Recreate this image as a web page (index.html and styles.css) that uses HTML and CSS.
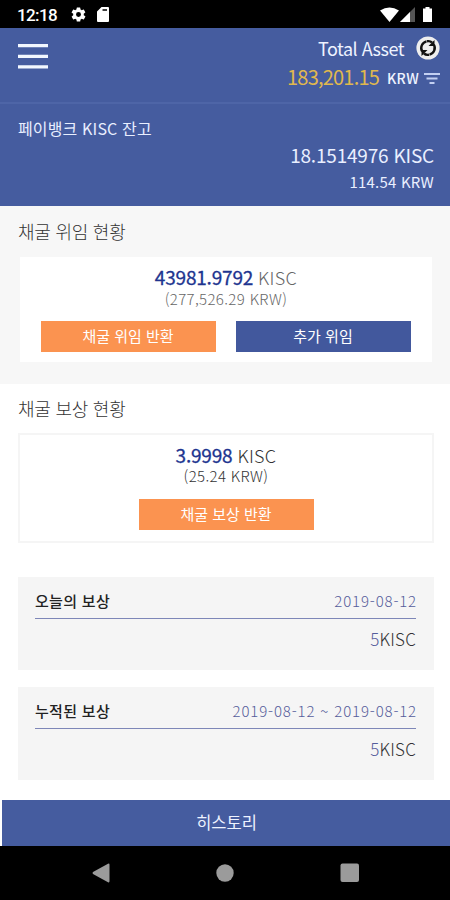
FILE: index.html
```html
<!DOCTYPE html>
<html lang="ko">
<head>
<meta charset="utf-8">
<title>KISC</title>
<link rel="stylesheet" href="styles.css">
</head>
<body>
<div class="status">
  <span class="clock">12:18</span>
  <svg class="gear" width="17" height="17" viewBox="0 0 24 24"><path fill="#fff" d="M19.4 13a7.500 7.500 0 0 0 0-2l2.100-1.650a.5.5 0 0 0 .12-.64l-2-3.460a.5.5 0 0 0-.61-.22l-2.490 1a7.300 7.300 0 0 0-1.690-.98l-.38-2.650A.49.49 0 0 0 14 2h-4a.49.49 0 0 0-.49.420l-.38 2.650c-.61.25-1.170.59-1.690.98l-2.490-1a.49.49 0 0 0-.61.22l-2 3.460a.5.5 0 0 0 .12.64L4.570 11a7.900 7.900 0 0 0 0 2l-2.110 1.650a.5.5 0 0 0-.12.64l2 3.460c.12.22.39.3.61.22l2.490-1c.52.4 1.080.73 1.690.98l.38 2.650c.03.24.24.4.49.4h4c.25 0 .46-.18.49-.42l.38-2.650c.61-.25 1.170-.59 1.690-.98l2.490 1c.23.09.49 0 .61-.22l2-3.460a.5.5 0 0 0-.12-.64zM12 15.500a3.500 3.500 0 1 1 0-7 3.500 3.500 0 0 1 0 7z"/></svg>
  <svg class="card-icon" width="12" height="15" viewBox="0 0 12 15"><path fill="#fff" fill-rule="evenodd" d="M4.500 0H11a1 1 0 0 1 1 1v13a1 1 0 0 1-1 1H1a1 1 0 0 1-1-1V4.500zM5.500 2.200v1.600h4.500V2.200z"/></svg>
  <svg class="signals" width="55" height="16" viewBox="0 0 55 16"><path fill="#fff" d="M0 3.500Q9.500-2.500 19 3.500L9.500 15z"/><path fill="#555" d="M35 0v15H20z"/><path fill="#fff" d="M30 5v10H20z"/><path fill="#fff" d="M43 1.500h2.500V0h4v1.500H52V15h-9z"/></svg>
</div>
<header class="top">
  <svg class="menu" width="30" height="26" viewBox="0 0 30 26"><path fill="#f2f7ff" d="M0 0h30v3.300H0zM0 10.700h30V14H0zM0 21.200h30v3.300H0z"/></svg>
  <div class="totals">
    <div class="line asset"><span class="asset-label">Total Asset</span>
      <svg width="24" height="24" viewBox="0 0 24 24"><circle cx="12" cy="12" r="11.600" fill="#eee"/><g fill="none" stroke="#111" stroke-width="2.400"><path d="M6.200 15.500A6.800 6.800 0 0 1 10.500 5.400"/><path d="M17.800 8.500A6.800 6.800 0 0 1 13.500 18.600"/><path d="M11 5.300q3-.6 5 1.200M13 18.700q-3 .6-5-1.200"/></g><path fill="#111" d="M18.500 4v6h-6zM5.500 20v-6h6z"/></svg>
    </div>
    <div class="line amount"><span class="gold">183,201.15</span><span class="unit">KRW</span>
      <svg width="16" height="12" viewBox="0 0 16 12"><path fill="#c3d0f2" d="M0 0h16v2H0zM2.500 4.500h11v2h-11zM5.500 9h5v2h-5z"/></svg>
    </div>
  </div>
</header>
<section class="balance">
  <div class="balance-title">페이뱅크 KISC 잔고</div>
  <div class="balance-coin">18.1514976 KISC</div>
  <div class="balance-krw">114.54 KRW</div>
</section>
<section class="panel delegated">
  <h2>채굴 위임 현황</h2>
  <div class="card">
    <div class="coin"><b>43981.9792</b><span>KISC</span></div>
    <div class="krw">(277,526.29 KRW)</div>
    <div class="buttons"><div class="btn">채굴 위임 반환</div><div class="btn blue">추가 위임</div></div>
  </div>
</section>
<section class="panel reward">
  <h2>채굴 보상 현황</h2>
  <div class="card">
    <div class="coin"><b>3.9998</b><span>KISC</span></div>
    <div class="krw">(25.24 KRW)</div>
    <div class="buttons"><div class="btn">채굴 보상 반환</div></div>
  </div>
</section>
<section class="records">
  <div class="record">
    <div class="record-head"><b>오늘의 보상</b><span>2019-08-12</span></div>
    <div class="record-value"><i>5</i>KISC</div>
  </div>
  <div class="record">
    <div class="record-head"><b>누적된 보상</b><span>2019-08-12 ~ 2019-08-12</span></div>
    <div class="record-value"><i>5</i>KISC</div>
  </div>
</section>
<div class="history">히스토리</div>
<nav class="nav">
  <svg width="18" height="20" viewBox="0 0 18 20"><path fill="#9b9b9b" d="M16 .8Q17.500 0 17.500 2v16q0 2-1.500 1.200L1 11Q0 10 1 9z"/></svg>
  <svg width="18" height="18" viewBox="0 0 18 18"><circle cx="9" cy="9" r="8.700" fill="#9b9b9b"/></svg>
  <svg width="20" height="20" viewBox="0 0 20 20"><rect x=".5" y=".5" width="18.500" height="18.500" rx="2" fill="#9b9b9b"/></svg>
</nav>
</body>
</html>
```
FILE: styles.css
```css
* { box-sizing: border-box; }
body { margin: 0; width: 450px; height: 900px; overflow: hidden; background: #fff; font-family: "Noto Sans CJK KR", sans-serif; white-space: nowrap; display: flex; flex-direction: column; }
svg { display: block; flex: none; }
.status { height: 28px; background: #000; display: flex; align-items: center; padding: 1px 15px 0 17px; }
.clock { width: 53px; color: #fff; font: 500 17px/28px Roboto, sans-serif; letter-spacing: -.6px; }
.card-icon { margin-left: 10px; }
.signals { margin-left: auto; }
.top { height: 76px; background: #455c9f; border-bottom: 2px solid #4e65a7; display: flex; justify-content: space-between; padding: 7px 10px 0 18px; }
.menu { margin-top: 9px; }
.line { display: flex; justify-content: flex-end; align-items: center; color: #eef3ff; }
.asset { height: 26px; font-size: 18px; line-height: 24px; gap: 12px; }
.asset-label { letter-spacing: -.5px; }
.amount { height: 26px; margin-top: 3px; line-height: 26px; }
.gold { color: #e0b84e; font-size: 20px; letter-spacing: -.8px; }
.unit { margin: 2px 5px 0 8px; font-size: 14px; font-weight: 500; letter-spacing: .3px; }
.amount svg { margin-top: 4px; }
.balance { height: 102px; background: #455c9f; color: #e9efff; padding: 12px 16px 0 18px; }
.balance-title { height: 24px; line-height: 24px; font-size: 16px; letter-spacing: .15px; }
.balance-coin { height: 28px; margin-top: 1px; line-height: 28px; font-size: 19px; text-align: right; letter-spacing: -.2px; }
.balance-krw { height: 24px; margin-top: 1px; line-height: 24px; font-size: 15px; text-align: right; letter-spacing: .2px; }
.panel { padding: 11px 16px 0 18px; }
.panel h2 { margin: 0; height: 28px; line-height: 28px; font-size: 18px; font-weight: 300; color: #333; letter-spacing: -.25px; }
.delegated { height: 178px; background: #f7f7f7; }
.delegated .card { margin: 12px 0 0 2px; width: 412px; height: 105px; background: #fff; padding-top: 8px; color: #666; }
.reward { height: 193px; padding-top: 10px; }
.reward .card { margin-top: 11px; height: 110px; border: 2px solid #f5f5f5; padding-top: 8px; color: #333; }
.coin { height: 24px; line-height: 24px; font-size: 18px; font-weight: 300; display: flex; justify-content: center; gap: 5px; letter-spacing: .3px; }
.coin b { font-size: 19px; font-weight: 400; color: #20348f; letter-spacing: -.2px; -webkit-text-stroke: .3px #20348f; }
.krw { height: 18px; line-height: 19px; text-align: center; font-size: 15px; font-weight: 300; letter-spacing: .35px; }
.reward .krw { line-height: 18px; }
.buttons { display: flex; justify-content: center; gap: 20px; margin-top: 14px; }
.delegated .buttons { padding-right: 1px; }
.btn { width: 175px; height: 31px; background: #fb9350; color: #fff; font-size: 15px; line-height: 29px; text-align: center; }
.btn.blue { background: #42589d; }
.records { height: 223px; padding: 0 16px 0 18px; display: flex; flex-direction: column; gap: 17px; }
.record { height: 93px; background: #f5f5f5; padding: 11px 18px 0 17px; }
.record-head { height: 31px; border-bottom: 1px solid #7e87b8; display: flex; justify-content: space-between; line-height: 25px; font-size: 15px; font-weight: 300; color: #555d9b; }
.record-head b { color: #222; font-weight: 500; letter-spacing: .3px; }
.record-head span { letter-spacing: .85px; margin-right: -1px; }
.record-value { height: 26px; margin-top: 7px; line-height: 26px; font-size: 17px; font-weight: 300; text-align: right; color: #333; letter-spacing: .2px; }
.record-value i { font-style: normal; color: #555d9b; }
.history { margin-left: 2px; height: 46px; padding-left: 1px; background: #455c9f; color: #eef3ff; font-size: 16.5px; line-height: 44px; text-align: center; }
.nav { height: 54px; background: #000; display: flex; align-items: center; justify-content: space-between; padding: 0 90px 0 92px; }
```
